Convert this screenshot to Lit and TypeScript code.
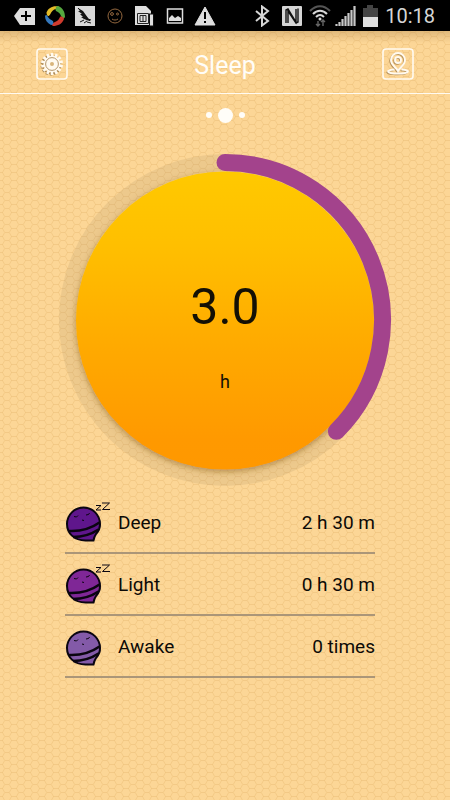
import { LitElement, html, css, svg } from "lit";
import { customElement, property } from "lit/decorators.js";

@customElement("status-bar")
class StatusBar extends LitElement {
  static styles = css`
    :host {
      display: flex;
      justify-content: space-between;
      height: 31px;
      padding: 0 15px 0 14px;
      background: #000;
      color: #d6d6d6;
      font: 20px/32px Roboto, sans-serif;
    }
    .group {
      display: flex;
      align-items: center;
      gap: 8px;
    }
    .system {
      gap: 4px;
    }
    .time {
      padding: 1px 0 0 2px;
    }
    svg {
      display: block;
      flex: none;
    }
  `;

  render() {
    return html`
      <div class="group">
        <svg width="22" height="22" viewBox="0 0 22 22">
          <path d="M0 11 6 3H21V20H6Z" fill="#dedede" />
          <path d="M12 6v10M7 11h10" stroke="#000" stroke-width="2" />
        </svg>
        <svg width="22" height="22" viewBox="0 0 22 22">
          <path d="M2 9C3 4 7 1 12 1 14 1 14 3 11 4 8 5 7 7 6 10 5 13 3 13 2 9Z" fill="#e3bb28" transform="rotate(10 11 11)" />
          <path d="M14 1C19 3 21 7 21 12 20 14 19 14 17 11 16 8 14 7 12 6 11 4 12 1 14 1Z" fill="#55a83f" />
          <path d="M20 14C18 19 14 21 9 21 7 20 8 18 11 17 14 16 15 14 16 12 17 11 20 12 20 14Z" fill="#cf3b2d" />
          <path d="M7 20C3 18 1 15 1 11 2 9 3 10 4 12 6 15 8 15 9 16 10 18 9 20 7 20Z" fill="#3478bd" />
        </svg>
        <svg width="22" height="22" viewBox="0 0 22 22">
          <rect x="1" y="1" width="20" height="20" fill="#d8d8d8" />
          <path d="M4 3 9 6 14 13 15 16 10 14 7 12 9 12 6 9 8 9 4 6 6 6Z" fill="#111" />
          <path d="M4 3 16 16M6 17l4-2M10 18l3-2M13 17l4 1M14 14l3 1" stroke="#111" />
        </svg>
        <svg width="22" height="22" viewBox="0 0 22 22" fill="none" stroke="#94683f">
          <circle cx="11" cy="11" r="7" />
          <circle cx="8" cy="9" r="1.4" />
          <circle cx="13.5" cy="9" r="1" />
          <path d="M8 14c2 1.4 4 1.4 6 0" />
        </svg>
        <svg width="22" height="22" viewBox="0 0 22 22">
          <path d="M1 1H12L17 6V20H1Z" fill="#dedede" />
          <path d="M3.500 8.500h11v10h-11z" fill="none" stroke="#222" />
          <path d="M6 10.500h6v6H6zM9 10v7" fill="none" stroke="#222" />
          <rect x="15.500" y="9" width="4" height="12" fill="#dedede" stroke="#111" />
        </svg>
        <svg width="22" height="22" viewBox="0 0 22 22">
          <rect x="3.500" y="4" width="15" height="14" fill="none" stroke="#dedede" stroke-width="1.500" />
          <path d="M5 16V13L8 10 11 13 14 11 17 13V16Z" fill="#dedede" />
        </svg>
        <svg width="22" height="22" viewBox="0 0 22 22">
          <path d="M11 2 21 20H1Z" fill="#dedede" stroke="#dedede" stroke-linejoin="round" />
          <path d="M11 7v7M11 16v2" stroke="#000" stroke-width="2" />
        </svg>
      </div>
      <div class="group system">
        <svg width="26" height="22" viewBox="0 0 26 22">
          <path d="M7 6 19 16 13 20.500V1.500L19 6 7 16" fill="none" stroke="#d6d6d6" stroke-width="2" />
        </svg>
        <svg width="26" height="22" viewBox="0 0 26 22">
          <rect x="3" y="1" width="20" height="20" rx="1" fill="#d6d6d6" />
          <path d="M7 18V5l2-1 8 13V4M19 3.500V17l-2 1L9 6v12" fill="none" stroke="#111" stroke-width="1.400" />
        </svg>
        <svg width="22" height="22" viewBox="0 0 22 22" fill="none">
          <path d="M1 6C7-.5 15-.5 21 6" stroke="#555" stroke-width="2" />
          <path d="M4 9c4-4.500 10-4.500 14 0M7 12c2.500-2.500 5.500-2.500 8 0" stroke="#d6d6d6" stroke-width="2" />
          <circle cx="11" cy="14" r="1.500" fill="#d6d6d6" />
          <path d="M9 16v5M7 19l2 2 2-2M14 21v-6M12 17l2-2 2 2" stroke="#666" stroke-width="1.400" />
        </svg>
        <svg width="22" height="22" viewBox="0 0 22 22">
          <path d="M1.500 21v-2M4.500 21v-4M7.500 21v-7M10.500 21V11M13.500 21V8M16.500 21V5M19.500 21V1" stroke="#c8c8c8" stroke-width="2.200" />
        </svg>
        <svg width="18" height="22" viewBox="0 0 18 22">
          <path d="M6 0h6v3h5v9H2V3h4z" fill="#444" />
          <path d="M2 12h15v10H2z" fill="#dedede" />
        </svg>
        <span class="time">10:18</span>
      </div>
    `;
  }
}

@customElement("sleep-dial")
class SleepDial extends LitElement {
  @property({ type: Number }) hours = 0;
  @property({ type: Number }) goal = 8;

  static styles = css`
    :host {
      display: grid;
      justify-items: center;
      color: #141005;
      font-family: Roboto, sans-serif;
    }
    .ring,
    .reading {
      grid-area: 1 / 1;
    }
    .ring {
      display: block;
      width: 340px;
      height: 340px;
    }
    .reading {
      z-index: 1;
      display: flex;
      flex-direction: column;
      align-items: center;
      gap: 32px;
      padding-top: 126px;
    }
    .value {
      font-size: 50px;
      line-height: 62px;
    }
    .unit {
      font-size: 18px;
      line-height: 24px;
    }
  `;

  render() {
    const r = 157.5;
    const angle = (this.hours / this.goal) * 2 * Math.PI;
    const x = 170 + r * Math.sin(angle);
    const y = 170 - r * Math.cos(angle);
    const large = angle > Math.PI ? 1 : 0;
    return html`
      <svg class="ring" viewBox="0 0 340 340">
        <defs>
          <linearGradient id="disc" x1="0" y1="0" x2="0" y2="1">
            <stop offset="0" stop-color="#ffc900" />
            <stop offset="0.250" stop-color="#ffbf00" />
            <stop offset="0.600" stop-color="#ffa900" />
            <stop offset="0.900" stop-color="#ff9900" />
            <stop offset="1" stop-color="#ff9800" />
          </linearGradient>
          <filter id="shade" x="-10%" y="-10%" width="120%" height="120%">
            <feDropShadow dx="0" dy="2" stdDeviation="3" flood-color="#7a4d10" flood-opacity="0.500" />
          </filter>
        </defs>
        <circle cx="170" cy="170" r=${r} fill="none" stroke="#a08a60" stroke-opacity="0.160" stroke-width="17" />
        <circle cx="170" cy="170.500" r="149" fill="url(#disc)" filter="url(#shade)" />
        ${svg`<path d="M170 ${170 - r}A${r} ${r} 0 ${large} 1 ${x} ${y}" fill="none" stroke="#a3438c" stroke-width="17" stroke-linecap="round" />`}
      </svg>
      <div class="reading">
        <span class="value">${this.hours.toFixed(1)}</span>
        <span class="unit">h</span>
      </div>
    `;
  }
}

@customElement("app-root")
class AppRoot extends LitElement {
  static styles = css`
    :host {
      display: flex;
      flex-direction: column;
      min-height: 100vh;
      font-family: Roboto, sans-serif;
      background: #fcd696
        url("data:image/svg+xml,%3Csvg xmlns='http://www.w3.org/2000/svg' width='14' height='8' viewBox='0 0 14 8'%3E%3Cpath d='M0 4.500H2.500L4.700 .5H9.300L11.500 4.500H14M2.500 4.500L4.700 8.500H9.300L11.500 4.500' fill='none' stroke='%23e0b064' stroke-opacity='.32'/%3E%3C/svg%3E");
    }
    header {
      display: grid;
      grid-template-columns: 32px 1fr 32px;
      align-items: center;
      height: 58px;
      padding: 4px 36px 0;
      border-bottom: 1px solid #fffaf0;
      background: linear-gradient(#a0784050, #a0784000 12px);
    }
    h1 {
      margin: 0;
      padding-top: 3px;
      color: #fffdf8;
      font-size: 25px;
      font-weight: 400;
      line-height: 32px;
      text-align: center;
    }
    .tool {
      display: block;
      width: 32px;
      height: 32px;
      margin: 0;
      padding: 0;
      border: 0;
      background: none;
    }
    .tool svg {
      display: block;
    }
    .pages {
      display: flex;
      justify-content: center;
      align-items: center;
      gap: 6px;
      height: 16px;
      padding-top: 13px;
    }
    .dot {
      width: 6px;
      height: 6px;
      border-radius: 50%;
      background: #fffdf8;
    }
    .current {
      width: 15px;
      height: 15px;
    }
    sleep-dial {
      padding-top: 27px;
    }
    dl {
      margin: 2px 75px 0 65px;
    }
    .row {
      display: grid;
      grid-template-columns: 48px 1fr auto;
      align-items: center;
      column-gap: 5px;
      height: 60px;
      border-bottom: 2px solid #ab9678;
      color: #0c0a06;
      font-size: 19px;
      line-height: 24px;
    }
    dt,
    dd {
      margin: 0;
      padding-top: 2px;
    }
    .row svg {
      display: block;
    }
  `;

  private stages = [
    { name: "Deep", value: "2 h 30 m", color: "#5f168c", asleep: true },
    { name: "Light", value: "0 h 30 m", color: "#7f2796", asleep: true },
    { name: "Awake", value: "0 times", color: "#835aa8", asleep: false },
  ];

  private face(color: string, asleep: boolean) {
    return html`
      <svg width="48" height="44" viewBox="0 0 48 44" fill="none" stroke="#0a0510">
        <path
          d="M28.500 40.500H20.500C9 40.500 2 33 2 24A16.500 16.500 0 0 1 35 24C35.300 29 33 31.500 31 34Q29 37 28.500 40.500Z"
          fill=${color}
          stroke-width="2"
          stroke-linejoin="round"
        />
        <path d="M4 31C14 31.500 26 28.500 34.500 22.500M8 37C17 37 26 34.500 33.500 29.500" stroke-width="2.600" />
        <path d="M9 16.500l2.500.5 1.500-1.500M21 15l2.500-.5 1-1.500M17 20l2 .5" stroke-width="1" />
        ${asleep
          ? svg`<path d="M31 5.500h5l-5 4.500h5M37 3h7.500l-7 6.500h7.500" stroke-width="1" />`
          : null}
      </svg>
    `;
  }

  render() {
    const teeth = Array.from({ length: 14 }, (_, i) => (i * 360) / 14);
    return html`
      <status-bar></status-bar>
      <header>
        <button class="tool" aria-label="Settings">
          <svg width="32" height="32" viewBox="0 0 32 32" fill="none">
            <rect x="1" y="1" width="30" height="30" rx="3" stroke="#fffaf0" stroke-width="1.600" />
            <g transform="translate(-1 1)" stroke="#9a7848" opacity="0.800">
              <circle cx="16" cy="16" r="8.500" stroke-width="1.500" />
              ${teeth.map((a) => svg`<path d="M16 5.500v3" stroke-width="2.400" transform="rotate(${a} 16 16)" />`)}
            </g>
            ${teeth.map((a) => svg`<path d="M16 5v4" stroke="#fffaf0" stroke-width="2.600" transform="rotate(${a} 16 16)" />`)}
            <circle cx="16" cy="16" r="8.200" fill="#fffaf0" />
            <circle cx="16" cy="16" r="6.400" stroke="#b5966a" />
            <circle cx="16" cy="16" r="2" fill="#d9b47a" />
          </svg>
        </button>
        <h1>Sleep</h1>
        <button class="tool" aria-label="Location">
          <svg width="32" height="32" viewBox="0 0 32 32" fill="none">
            <rect x="1" y="1" width="30" height="30" rx="3" stroke="#fffaf0" stroke-width="1.600" />
            <g transform="translate(-1 1)" stroke="#9a7848" stroke-width="1.500" opacity="0.700">
              <path d="M16 23C14 19 9 17 9 12a7 7 0 0 1 14 0C23 17 18 19 16 23Z" />
              <path d="M12.500 21.500C3 22 4 25.500 16 25.500S29 22 19.500 21.500" />
              <circle cx="16" cy="12" r="3" />
            </g>
            <g stroke="#fffaf0" stroke-width="1.900">
              <path d="M16 23C14 19 9 17 9 12a7 7 0 0 1 14 0C23 17 18 19 16 23Z" />
              <path d="M12.500 21.500C3 22 4 25.500 16 25.500S29 22 19.500 21.500" />
              <circle cx="16" cy="12" r="3" />
            </g>
          </svg>
        </button>
      </header>
      <div class="pages">
        <span class="dot"></span>
        <span class="dot current"></span>
        <span class="dot"></span>
      </div>
      <sleep-dial .hours=${3} .goal=${8}></sleep-dial>
      <dl>
        ${this.stages.map(
          (s) => html`
            <div class="row">
              ${this.face(s.color, s.asleep)}
              <dt>${s.name}</dt>
              <dd>${s.value}</dd>
            </div>
          `,
        )}
      </dl>
    `;
  }
}
